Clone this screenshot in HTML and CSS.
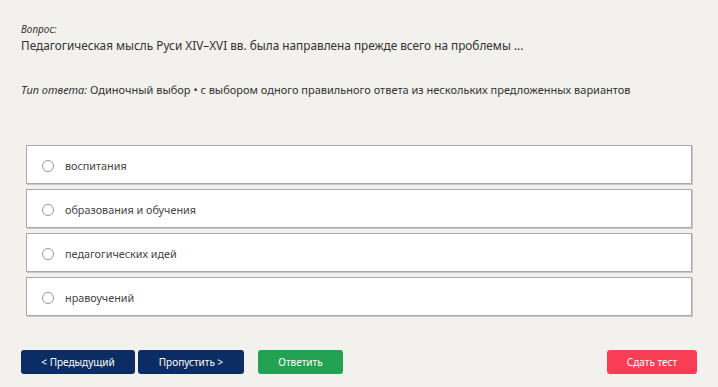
FILE: index.html
```html
<!DOCTYPE html>
<html lang="ru">

<head>
  <meta charset="UTF-8">
  <meta name="viewport" content="width=device-width, initial-scale=1.0">
  <title>Тест</title>
  <link rel="stylesheet" href="styles.css">
</head>

<body>
  <div class="vopros">
    <p class="label">Вопрос:</p>
    <p class="text">Педагогическая мысль Руси XIV–XVI вв. была направлена прежде всего на проблемы ...</p>
  </div>

  <p class="tip"><em>Тип ответа:</em> Одиночный выбор • с выбором одного правильного ответа из нескольких предложенных вариантов</p>

  <div class="varianty">
    <label class="variant"><span class="radio"></span>воспитания</label>
    <label class="variant"><span class="radio"></span>образования и обучения</label>
    <label class="variant"><span class="radio"></span>педагогических идей</label>
    <label class="variant"><span class="radio"></span>нравоучений</label>
  </div>

  <div class="knopki">
    <button type="button" class="btn sinyaya prev">&lt; Предыдущий</button>
    <button type="button" class="btn sinyaya skip">Пропустить &gt;</button>
    <button type="button" class="btn zelenaya">Ответить</button>
    <button type="button" class="btn krasnaya">Сдать тест</button>
  </div>
</body>

</html>
```

FILE: styles.css
```css
body {
  margin: 0;
  padding: 22px 21px 0 21px;
  background-color: #f2f1ee;
  font-family: "Noto Sans", "Open Sans", sans-serif;
  color: #333;
}

.vopros p {
  margin: 0;
}

.vopros .label {
  font-size: 10px;
  font-style: italic;
  line-height: 14px;
}

.vopros .text {
  font-size: 11.8px;
  line-height: 18px;
}

.tip {
  margin: 28px 0 0 0;
  font-size: 11px;
  line-height: 16px;
}

.tip em {
  font-weight: normal;
}

.varianty {
  margin: 47px 5px 0 5px;
  display: flex;
  flex-direction: column;
  gap: 5px;
}

.variant {
  display: flex;
  align-items: center;
  height: 39px;
  padding-left: 15px;
  padding-top: 2px;
  box-sizing: border-box;
  background-color: #fff;
  border: 1px solid #a9a9a9;
  box-shadow: 1px 1px 0 #c8c8c8;
  font-size: 10.8px;
  color: #444;
}

.radio {
  display: inline-block;
  width: 10px;
  height: 10px;
  margin-right: 11px;
  border: 1px solid #999;
  border-radius: 50%;
}

.knopki {
  display: flex;
  margin-top: 34px;
  gap: 3px;
}

.btn {
  height: 24px;
  border: none;
  border-radius: 3px;
  color: #fff;
  font-family: "Noto Sans", "Open Sans", sans-serif;
  font-size: 10px;
  cursor: pointer;
}

.sinyaya {
  background-color: #0b2d63;
}

.prev {
  width: 114px;
}

.skip {
  width: 106px;
}

.zelenaya {
  width: 85px;
  margin-left: 11px;
  background-color: #22a152;
}

.krasnaya {
  width: 90px;
  margin-left: auto;
  background-color: #f83d55;
}
```
